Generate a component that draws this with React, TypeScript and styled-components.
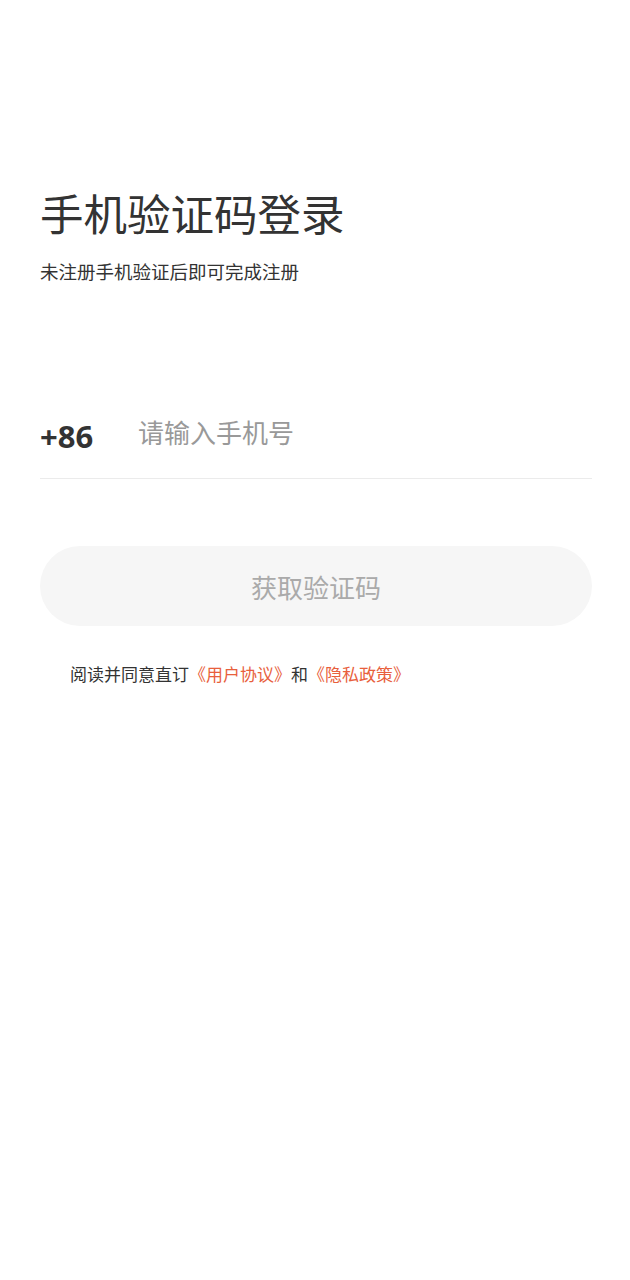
import React from 'react';
import styled, { createGlobalStyle } from 'styled-components';

const GlobalStyle = createGlobalStyle`
  html, body {
    margin: 0;
    padding: 0;
    background: #fff;
  }
  body {
    font-family: "Noto Sans", "Noto Sans CJK SC", sans-serif;
    color: #333;
  }
`;

const Page = styled.div`
  min-height: 1280px;
  padding: 184px 38px 0 40px;
  box-sizing: border-box;
  display: flex;
  flex-direction: column;
`;

const Title = styled.h1`
  margin: 0;
  font-size: 43.5px;
  line-height: 60px;
  font-weight: 400;
  color: #333;
`;

const Subtitle = styled.p`
  margin: 15px 0 0;
  font-size: 18.5px;
  line-height: 26px;
  color: #333;
`;

const PhoneRow = styled.div`
  margin-top: 120px;
  display: flex;
  align-items: center;
  height: 60px;
  padding-bottom: 13px;
  border-bottom: 1px solid #ebebeb;
`;

const Prefix = styled.span`
  font-family: "Noto Sans", sans-serif;
  font-size: 31px;
  font-weight: 700;
  color: #333;
  width: 98px;
  line-height: 60px;
  margin-top: 2px;
`;

const PhoneInput = styled.input`
  flex: 1;
  border: none;
  outline: none;
  padding: 0 0 7px;
  background: transparent;
  font-family: "Noto Sans CJK SC", sans-serif;
  font-size: 26px;
  color: #333;

  &::placeholder {
    color: #999;
  }
`;

const CodeButton = styled.button`
  margin-top: 67px;
  height: 80px;
  border: none;
  border-radius: 40px;
  background: #f6f6f6;
  color: #aaa;
  font-family: "Noto Sans CJK SC", sans-serif;
  font-size: 26px;
  cursor: default;
`;

const Agreement = styled.p`
  margin: 37px 0 0;
  padding-left: 30px;
  font-size: 17px;
  line-height: 24px;
  color: #333;
`;

const Link = styled.span`
  color: #e8603c;
`;

export default function App() {
  return (
    <>
      <GlobalStyle />
      <Page>
        <Title>手机验证码登录</Title>
        <Subtitle>未注册手机验证后即可完成注册</Subtitle>
        <PhoneRow>
          <Prefix>+86</Prefix>
          <PhoneInput type="tel" placeholder="请输入手机号" />
        </PhoneRow>
        <CodeButton>获取验证码</CodeButton>
        <Agreement>
          阅读并同意直订<Link>《用户协议》</Link>和<Link>《隐私政策》</Link>
        </Agreement>
      </Page>
    </>
  );
}
